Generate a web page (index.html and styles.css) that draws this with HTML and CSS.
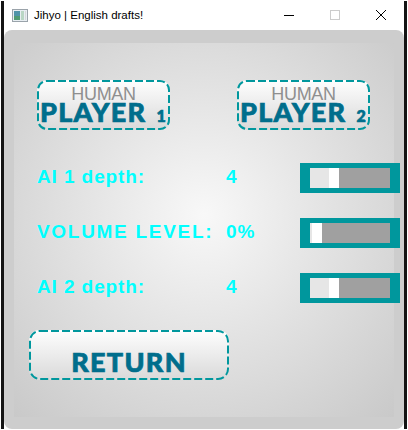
FILE: index.html
```html
<!DOCTYPE html>
<html lang="en">
<head>
    <meta charset="UTF-8">
    <meta name="viewport" content="width=device-width, initial-scale=1.0">
    <title>Jihyo | English drafts!</title>
    <link rel="stylesheet" href="styles.css">
</head>
<body>
    <div class="window">
        <header class="titlebar">
            <svg class="app-icon" width="16" height="13" viewBox="0 0 16 13">
                <rect x="0.5" y="0.5" width="15" height="12" fill="#e8eef2" stroke="#9aa3aa"/>
                <rect x="2" y="2" width="6" height="9" fill="#4f93a8"/>
                <rect x="2" y="7" width="6" height="4" fill="#4f9a72"/>
                <rect x="9" y="2" width="3" height="9" fill="#b9d6c4"/>
                <rect x="13" y="2" width="1" height="9" fill="#d5d8da"/>
            </svg>
            <span class="title">Jihyo | English drafts!</span>
            <div class="controls">
                <svg class="control" width="46" height="30" viewBox="0 0 46 30"><path d="M18 14.5h10" stroke="#000"/></svg>
                <svg class="control" width="46" height="30" viewBox="0 0 46 30"><rect x="18.5" y="9.5" width="9" height="9" fill="none" stroke="#ccc"/></svg>
                <svg class="control" width="46" height="30" viewBox="0 0 46 30"><path d="M18 9l10 10M28 9l-10 10" stroke="#000" fill="none"/></svg>
            </div>
        </header>

        <main class="panel">
            <div class="players">
                <button class="btn btn-player">
                    <svg class="dash" width="133" height="50"><rect x="1" y="1" width="131" height="48" rx="9"/></svg>
                    <span class="human">HUMAN</span>
                    <span class="player">PLAYER<small>1</small></span>
                </button>
                <button class="btn btn-player">
                    <svg class="dash" width="133" height="50"><rect x="1" y="1" width="131" height="48" rx="9"/></svg>
                    <span class="human">HUMAN</span>
                    <span class="player">PLAYER<small>2</small></span>
                </button>
            </div>

            <div class="settings">
                <div class="row">
                    <span class="label">AI 1 depth:</span>
                    <span class="value">4</span>
                    <div class="slider"><div class="track"><div class="fill" style="width: 19px"></div><div class="thumb"></div></div></div>
                </div>
                <div class="row">
                    <span class="label label-wide">VOLUME LEVEL:</span>
                    <span class="value">0%</span>
                    <div class="slider"><div class="track"><div class="fill" style="width: 2px"></div><div class="thumb"></div></div></div>
                </div>
                <div class="row">
                    <span class="label">AI 2 depth:</span>
                    <span class="value">4</span>
                    <div class="slider"><div class="track"><div class="fill" style="width: 19px"></div><div class="thumb"></div></div></div>
                </div>
            </div>

            <button class="btn btn-return">
                <svg class="dash" width="200" height="50"><rect x="1" y="1" width="198" height="48" rx="10"/></svg>
                <span class="player">RETURN</span>
            </button>
        </main>
    </div>
</body>
</html>
```

FILE: styles.css
```css
body {
    margin: 0;
    background-color: #fff;
    font-family: "Liberation Sans", Arial, sans-serif;
}
.window {
    width: 400px;
    height: 428px;
    margin: 1px;
    border-left: 3px solid #141414;
    border-right: 3px solid #141414;
    display: flex;
    flex-direction: column;
}
.titlebar {
    height: 29px;
    display: flex;
    align-items: center;
    background-color: #fff;
    flex-shrink: 0;
}
.app-icon {
    margin-left: 8px;
    margin-right: 6px;
}
.title {
    font-size: 11.5px;
    color: #000;
    padding-bottom: 2px;
}
.controls {
    margin-left: auto;
    display: flex;
}
.control {
    display: block;
}
.panel {
    flex: 1;
    box-sizing: border-box;
    padding: 50px 0 0 25px;
    border-radius: 8px;
    background: radial-gradient(circle at 50% 46%, #f8f8f8 0, #c9c9c9 100%) 10px 13px / 380px 374px no-repeat, #cdcdcd;
}
.players {
    display: flex;
    gap: 67px;
    margin-left: 8px;
}
.btn {
    position: relative;
    display: block;
    padding: 0;
    border: none;
    border-radius: 10px;
    background: linear-gradient(#fefefe, #d9d9d9);
    font-family: inherit;
    text-align: center;
}
.btn-player {
    width: 133px;
    height: 50px;
    padding-top: 2px;
}
.btn-return {
    width: 200px;
    height: 50px;
    margin-top: 27px;
    padding-top: 13px;
}
.dash {
    position: absolute;
    left: 0;
    top: 0;
}
.dash rect {
    fill: none;
    stroke: #00979d;
    stroke-width: 2;
    stroke-dasharray: 8 3;
}
.human {
    display: block;
    font-size: 18px;
    line-height: 16px;
    letter-spacing: -0.3px;
    color: #8f8f8f;
}
.player {
    display: block;
    font-family: Lato, sans-serif;
    font-weight: 900;
    font-size: 27px;
    line-height: 20px;
    letter-spacing: 1.3px;
    color: #006e8c;
    -webkit-text-stroke: 0.7px #006e8c;
}
.player small {
    font-size: 16px;
    margin-left: 10px;
}
.btn-return .player {
    line-height: 24px;
}
.settings {
    margin-left: 8px;
    margin-top: 33px;
    display: flex;
    flex-direction: column;
    gap: 25px;
}
.row {
    display: flex;
    align-items: center;
    height: 30px;
    color: #0ff;
    font-size: 19px;
    font-weight: bold;
    letter-spacing: 0.9px;
}
.label {
    width: 189px;
    padding-bottom: 3px;
}
.label-wide {
    letter-spacing: 1.7px;
}
.value {
    width: 74px;
    padding-bottom: 3px;
    letter-spacing: 1px;
}
.slider {
    width: 80px;
    padding: 5px 10px;
    background-color: #00979d;
}
.track {
    display: flex;
    height: 20px;
    background-color: #a0a0a0;
}
.fill {
    background-color: #e6e6e6;
}
.thumb {
    width: 10px;
    background-color: #fff;
}
```
